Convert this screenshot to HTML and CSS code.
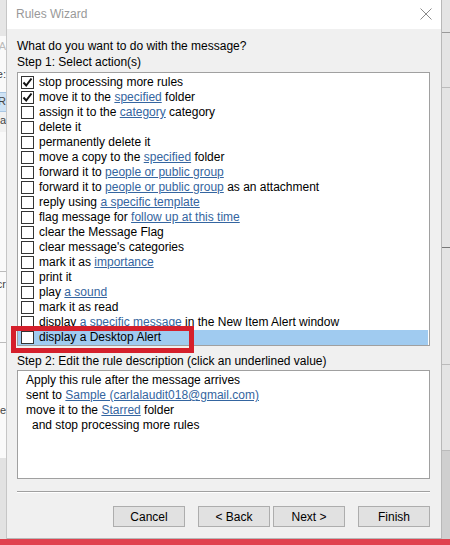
FILE: index.html
```html
<!DOCTYPE html>
<html>
<head>
<meta charset="utf-8">
<link rel="stylesheet" href="styles.css">
</head>
<body>
<div class="screen">
  <div class="main">
    <div class="bg-left">
      <div class="bl-top"></div>
      <div class="bl-a">A</div>
      <div class="bl-e">e:</div>
      <div class="bl-r">R</div>
      <div class="bl-paren">(a</div>
      <div class="bl-space"></div>
      <div class="bl-cr">cr</div>
      <div class="bl-space2"></div>
      <div class="bl-e2">e</div>
      <div class="bl-band"></div>
    </div>
    <div class="dialog">
      <div class="titlebar">
        <span class="title">Rules Wizard</span>
        <svg class="close" width="12" height="12" viewBox="0 0 12 12"><path d="M0.5 0.5 L11.5 11.5 M11.5 0.5 L0.5 11.5" stroke="#8a8a8a" stroke-width="1" fill="none"/></svg>
      </div>
      <div class="body">
        <div class="label q">What do you want to do with the message?</div>
        <div class="label">Step 1: Select action(s)</div>
        <div class="list">
          <div class="row"><span class="cb checked"><svg width="11" height="11" viewBox="0 0 11 11"><path d="M1.5 5.5 L4.2 8.5 L9.5 1.5" stroke="#111" stroke-width="2" fill="none"/></svg></span>stop processing more rules</div>
          <div class="row"><span class="cb checked"><svg width="11" height="11" viewBox="0 0 11 11"><path d="M1.5 5.5 L4.2 8.5 L9.5 1.5" stroke="#111" stroke-width="2" fill="none"/></svg></span>move it to the&nbsp;<span class="link">specified</span>&nbsp;folder</div>
          <div class="row"><span class="cb"></span>assign it to the&nbsp;<span class="link">category</span>&nbsp;category</div>
          <div class="row"><span class="cb"></span>delete it</div>
          <div class="row"><span class="cb"></span>permanently delete it</div>
          <div class="row"><span class="cb"></span>move a copy to the&nbsp;<span class="link">specified</span>&nbsp;folder</div>
          <div class="row"><span class="cb"></span>forward it to&nbsp;<span class="link">people or public group</span></div>
          <div class="row"><span class="cb"></span>forward it to&nbsp;<span class="link">people or public group</span>&nbsp;as an attachment</div>
          <div class="row"><span class="cb"></span>reply using&nbsp;<span class="link">a specific template</span></div>
          <div class="row"><span class="cb"></span>flag message for&nbsp;<span class="link">follow up at this time</span></div>
          <div class="row"><span class="cb"></span>clear the Message Flag</div>
          <div class="row"><span class="cb"></span>clear message's categories</div>
          <div class="row"><span class="cb"></span>mark it as&nbsp;<span class="link">importance</span></div>
          <div class="row"><span class="cb"></span>print it</div>
          <div class="row"><span class="cb"></span>play&nbsp;<span class="link">a sound</span></div>
          <div class="row"><span class="cb"></span>mark it as read</div>
          <div class="row"><span class="cb"></span>display&nbsp;<span class="link">a specific message</span>&nbsp;in the New Item Alert window</div>
          <div class="row selected"><span class="cb"></span>display a Desktop Alert</div>
        </div>
        <div class="label step2">Step 2: Edit the rule description (click an underlined value)</div>
        <div class="desc">
          <div class="dline">Apply this rule after the message arrives</div>
          <div class="dline">sent to&nbsp;<span class="link">Sample (carlalaudit018@gmail.com)</span></div>
          <div class="dline">move it to the&nbsp;<span class="link">Starred</span>&nbsp;folder</div>
          <div class="dline indent">and stop processing more rules</div>
        </div>
        <div class="sep"></div>
        <div class="buttons">
          <div class="btn">Cancel</div>
          <div class="btn b-back">&lt; Back</div>
          <div class="btn b-next">Next &gt;</div>
          <div class="btn b-finish">Finish</div>
        </div>
      </div>
    </div>
    <div class="bg-right">
      <div class="br-a"></div>
      <div class="br-b"></div>
      <div class="br-c"></div>
      <div class="br-d"></div>
      <div class="br-e"></div>
      <div class="br-band"></div>
    </div>
  </div>
  <div class="redbar"></div>
  <div class="highlight"></div>
</div>
</body>
</html>
```
FILE: styles.css
```css
* { box-sizing: border-box; }
html, body { margin: 0; padding: 0; }
body {
  width: 450px;
  height: 545px;
  overflow: hidden;
  font-family: "Liberation Sans", Arial, sans-serif;
  font-size: 12px;
  color: #000;
  background: #f0f0f0;
}
.screen {
  position: relative;
  width: 450px;
  height: 545px;
  display: flex;
  flex-direction: column;
}
.main {
  display: flex;
  height: 539px;
}
.bg-left {
  width: 7px;
  display: flex;
  flex-direction: column;
  overflow: hidden;
  color: #444;
  font-size: 11px;
  line-height: 16px;
  background: #fafafa;
  border-right: 1px solid #c8c8c8;
}
.bg-left > div { display: flex; justify-content: flex-end; overflow: hidden; white-space: nowrap; }
.bl-top { height: 36px; background: #e6e6e6; }
.bl-a { height: 30px; color: #bbb; padding-top: 2px; }
.bl-e { height: 26px; }
.bl-r { height: 20px; background: #cfe3f5; border-top: 1px solid #a9c7e4; border-bottom: 1px solid #a9c7e4; }
.bl-paren { height: 20px; background: #f1f1f1; }
.bl-space { height: 140px; border-bottom: 1px solid #bbb; }
.bl-cr { height: 70px; padding-top: 4px; }
.bl-space2 { height: 60px; border-top: 1px solid #bbb; }
.bl-e2 { height: 56px; }
.bl-band { flex: 1; background: #e2e2e2; }

.dialog {
  width: 435px;
  display: flex;
  flex-direction: column;
  background: #f0f0f0;
  border-right: 1px solid #b8b8b8;
  border-bottom: 1px solid #b8b8b8;
  box-shadow: 1px 1px 2px rgba(0,0,0,0.15);
}
.titlebar {
  height: 29px;
  background: #fff;
  display: flex;
  align-items: center;
  justify-content: space-between;
  padding: 0 8px 1px 9px;
}
.title { color: #999; font-size: 12px; }
.close { margin-right: 1px; }
.body {
  flex: 1;
  padding: 9px 11px 0 10px;
  display: flex;
  flex-direction: column;
}
.label { line-height: 16px; height: 16px; }
.list {
  margin-top: 2px;
  height: 274px;
  background: #fff;
  border: 1px solid #a0a0a0;
  padding-top: 2px;
}
.row {
  height: 15px;
  line-height: 15px;
  display: flex;
  align-items: center;
  white-space: nowrap;
  padding-left: 3px;
}
.row.selected { background: #a0cbf0; margin-right: 1px; }
.cb {
  width: 13px;
  height: 13px;
  border: 1px solid #333;
  background: #fff;
  margin-right: 5px;
  flex: none;
  display: flex;
  align-items: center;
  justify-content: center;
}
.cb svg { display: block; }
.link { color: #3465a0; text-decoration: underline; }
.step2 { margin-top: 7px; }
.desc {
  margin-top: 1px;
  height: 109px;
  background: #fff;
  border: 1px solid #a0a0a0;
  padding: 2px 0 0 8px;
}
.dline { line-height: 15px; height: 15px; white-space: nowrap; display: flex; }
.indent { padding-left: 6px; }
.sep {
  margin-top: 12px;
  height: 2px;
  border-top: 1px solid #a0a0a0;
  border-bottom: 1px solid #fff;
}
.buttons {
  margin-top: 13px;
  display: flex;
  justify-content: flex-end;
  padding-right: 0;
}
.btn {
  width: 72px;
  height: 21px;
  background: #e1e1e1;
  border: 1px solid #adadad;
  display: flex;
  align-items: center;
  justify-content: center;
  font-size: 12px;
}
.b-back { margin-left: 13px; }
.b-next { margin-left: 3px; }
.b-finish { margin-left: 13px; }

.bg-right {
  flex: 1;
  display: flex;
  flex-direction: column;
  background: #e4e4e4;
}
.br-a { height: 33px; border-bottom: 1px solid #999; }
.br-b { height: 55px; border-bottom: 1px solid #bbb; }
.br-c { height: 160px; border-bottom: 1px solid #777; }
.br-d { height: 117px; border-bottom: 1px solid #bbb; }
.br-e { height: 86px; border-bottom: 1px solid #bbb; }
.br-band { flex: 1; background: #cfcfcf; }

.redbar {
  flex: 1;
  background: #e0424f;
}
.highlight {
  position: absolute;
  left: 11px;
  top: 326px;
  width: 183px;
  height: 27px;
  border: 5px solid #d51f2b;
}
```
